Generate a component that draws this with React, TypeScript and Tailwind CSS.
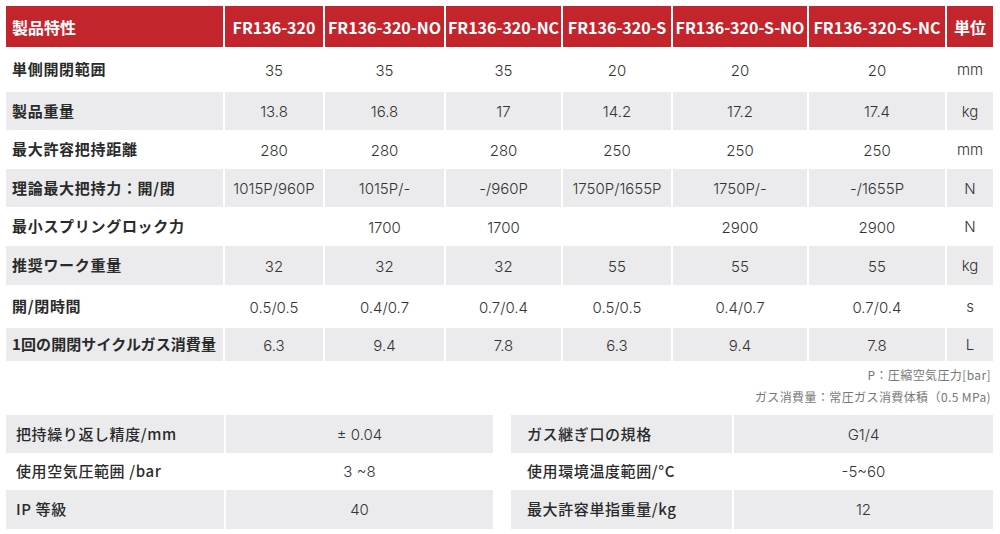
import React from "react";

const cols = ["FR136-320", "FR136-320-NO", "FR136-320-NC", "FR136-320-S", "FR136-320-S-NO", "FR136-320-S-NC"];

type Row = { label: string; vals: string[]; unit: string; h: string; gray: boolean; tight?: boolean };

const rows: Row[] = [
  { label: "単側開閉範囲", vals: ["35", "35", "35", "20", "20", "20"], unit: "mm", h: "h-[45px]", gray: false },
  { label: "製品重量", vals: ["13.8", "16.8", "17", "14.2", "17.2", "17.4"], unit: "kg", h: "h-[38px]", gray: true },
  { label: "最大許容把持距離", vals: ["280", "280", "280", "250", "250", "250"], unit: "mm", h: "h-[39px]", gray: false },
  { label: "理論最大把持力：開/閉", vals: ["1015P/960P", "1015P/-", "-/960P", "1750P/1655P", "1750P/-", "-/1655P"], unit: "N", h: "h-[38px]", gray: true },
  { label: "最小スプリングロック力", vals: ["", "1700", "1700", "", "2900", "2900"], unit: "N", h: "h-[39px]", gray: false },
  { label: "推奨ワーク重量", vals: ["32", "32", "32", "55", "55", "55"], unit: "kg", h: "h-[39px]", gray: true },
  { label: "開/閉時間", vals: ["0.5/0.5", "0.4/0.7", "0.7/0.4", "0.5/0.5", "0.4/0.7", "0.7/0.4"], unit: "s", h: "h-[43px]", gray: false },
  { label: "1回の開閉サイクルガス消費量", vals: ["6.3", "9.4", "7.8", "6.3", "9.4", "7.8"], unit: "L", h: "h-[33px]", gray: true, tight: true },
];

const CJK = "font-['Noto_Sans_CJK_JP','Noto_Sans',sans-serif]";
const NUM = "font-['Inter','Noto_Sans_CJK_JP',sans-serif]";

type Item = { label: string; val: string; h: string; gray: boolean };

function SmallTable({ items, gridCls, pad }: { items: Item[]; gridCls: string; pad: string }) {
  return (
    <div className={`grid ${gridCls} gap-x-[2px]`}>
      {items.map((it, i) => (
        <React.Fragment key={i}>
          <div className={`${it.h} ${it.gray ? "bg-[#ebebed]" : "bg-white"} flex items-center ${pad} text-[15px] font-medium tracking-[0.6px] text-[#2a2a2a] ${CJK}`}>
            {it.label}
          </div>
          <div className={`${it.h} ${it.gray ? "bg-[#ebebed]" : "bg-white"} flex items-center justify-center text-[15px] font-light text-[#333] pt-[2px] ${NUM}`}>
            {it.val}
          </div>
        </React.Fragment>
      ))}
    </div>
  );
}

export default function App() {
  return (
    <div className="w-[1000px] h-[534px] bg-white overflow-hidden">
      <div className="pt-[6px] pl-[6px]">
        <div className="grid grid-cols-[217px_98px_119px_115px_108px_134px_136px_46px] gap-x-[2px] w-[987px]">
          <div className={`h-[41px] bg-[#c4252d] text-white text-[16px] font-bold flex items-center pl-[6px] ${CJK}`}>製品特性</div>
          {cols.map((c) => (
            <div key={c} className={`h-[41px] bg-[#c4252d] text-white text-[16px] font-bold flex items-center justify-center whitespace-nowrap ${CJK}`}>
              {c}
            </div>
          ))}
          <div className={`h-[41px] bg-[#c4252d] text-white text-[16px] font-bold flex items-center justify-center ${CJK}`}>単位</div>
          {rows.map((r, i) => (
            <React.Fragment key={i}>
              <div
                className={`${r.h} ${r.gray ? "bg-[#ebebed]" : "bg-white"} flex items-center pl-[6px] text-[15px] font-bold text-[#2a2a2a] whitespace-nowrap ${r.tight ? "tracking-[0.1px]" : "tracking-[0.7px]"} ${CJK}`}
              >
                {r.label}
              </div>
              {r.vals.map((v, j) => (
                <div key={j} className={`${r.h} ${r.gray ? "bg-[#ebebed]" : "bg-white"} flex items-center justify-center text-[15px] font-light text-[#333] pt-[3px] ${NUM}`}>
                  {v}
                </div>
              ))}
              <div className={`${r.h} ${r.gray ? "bg-[#ebebed]" : "bg-white"} flex items-center justify-center text-[15px] font-light text-[#333] pt-[2px] ${NUM}`}>
                {r.unit}
              </div>
            </React.Fragment>
          ))}
        </div>
        <div className={`w-[987px] flex flex-col items-end pr-[2px] pt-[3px] text-[12px] tracking-[0.4px] text-[#777] leading-[22px] ${CJK}`}>
          <div>P：圧縮空気圧力[bar]</div>
          <div>ガス消費量：常圧ガス消費体積（0.5 MPa)</div>
        </div>
        <div className="flex gap-[18px] mt-[7px]">
          <SmallTable
            gridCls="grid-cols-[218px_267px] w-[487px]"
            pad="pl-[10px]"
            items={[
              { label: "把持繰り返し精度/mm", val: "± 0.04", h: "h-[38px]", gray: true },
              { label: "使用空気圧範囲 /bar", val: "3 ~8", h: "h-[37px]", gray: false },
              { label: "IP 等級", val: "40", h: "h-[39px]", gray: true },
            ]}
          />
          <SmallTable
            gridCls="grid-cols-[221px_259px] w-[482px]"
            pad="pl-[16px]"
            items={[
              { label: "ガス継ぎ口の規格", val: "G1/4", h: "h-[38px]", gray: true },
              { label: "使用環境温度範囲/°C", val: "-5~60", h: "h-[37px]", gray: false },
              { label: "最大許容単指重量/kg", val: "12", h: "h-[39px]", gray: true },
            ]}
          />
        </div>
      </div>
    </div>
  );
}
